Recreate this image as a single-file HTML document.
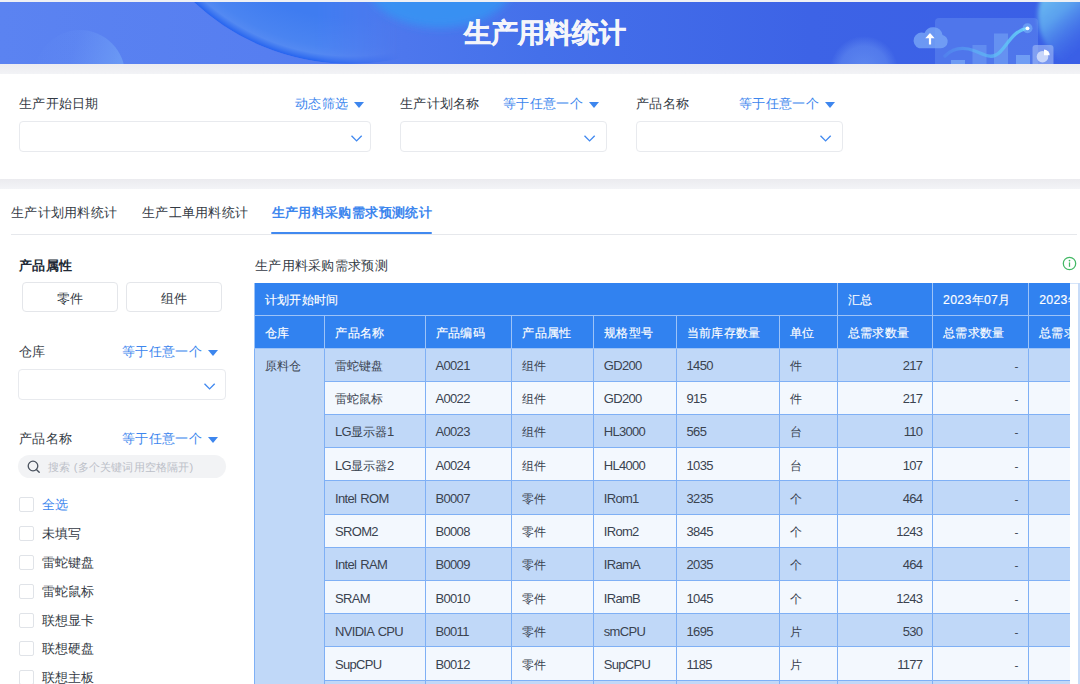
<!DOCTYPE html>
<html><head><meta charset="utf-8">
<style>
*{box-sizing:border-box;margin:0;padding:0}
html,body{width:1080px;height:684px;overflow:hidden;background:#eff0f4;font-family:"Liberation Sans",sans-serif;color:#333a44}
.abs{position:absolute}
#banner{position:absolute;left:0;top:2px;width:1080px;height:62px;overflow:hidden;background:linear-gradient(90deg,#5a83f0 0%,#4b78ee 30%,#3f6eea 60%,#3a62e6 85%,#3d66e8 100%)}
#title{position:absolute;left:464px;top:15px;font-size:26.5px;font-weight:bold;color:#f4f5fa;line-height:32px;white-space:nowrap;-webkit-text-stroke:0.5px #f4f5fa}
#filter{position:absolute;left:0;top:74px;width:1080px;height:105px;background:#fff}
#main{position:absolute;left:0;top:189px;width:1080px;height:495px;background:#fff}
.lbl{position:absolute;letter-spacing:0.3px;font-size:13px;line-height:16px;white-space:nowrap;color:#333a44}
.lnk{position:absolute;letter-spacing:0.35px;font-size:13px;line-height:16px;white-space:nowrap;color:#3d86ee}
.tri{display:inline-block;width:0;height:0;border-left:5px solid transparent;border-right:5px solid transparent;border-top:6px solid #3d86ee;vertical-align:middle;margin-left:5.5px;position:relative;top:0px}
.box{position:absolute;border:1px solid #e8eaee;border-radius:4px;background:#fff}
.chev{position:absolute;width:12px;height:7px}
.tab{position:absolute;top:16px;letter-spacing:0.3px;font-size:13px;line-height:16px;white-space:nowrap;color:#333a44}
.btn{position:absolute;top:93px;height:30px;border:1px solid #e4e6ea;border-radius:4px;font-size:13px;line-height:32px;text-align:center;color:#333a44}
.cb{position:absolute;left:18.5px;width:15px;height:15px;border:1px solid #e0e3e8;border-radius:2px;background:#fff;margin-top:-0.5px}
.rb{position:absolute;left:0;width:900px}
.hl{position:absolute;width:900px;height:1px;background:#7fb0f5}
.vl{position:absolute;width:1px;background:#7fb0f5}
.hhl{position:absolute;height:1px;background:#9cc3f8}
.hvl{position:absolute;width:1px;background:#9cc3f8}
.th{position:absolute;white-space:nowrap;color:#fff;font-size:12.3px;letter-spacing:0.3px;font-weight:400;padding-top:2px;-webkit-text-stroke:0.15px #fff}
.td{position:absolute;white-space:nowrap;color:#3a4350;font-size:11.7px;padding-top:1px}
.tr{text-align:right}
.lat{font-size:13px;letter-spacing:-0.7px;word-spacing:1.2px}
.cbl{position:absolute;left:42px;font-size:13px;line-height:12px;white-space:nowrap;color:#333a44}
</style></head><body>
<div id="banner">
<svg width="1080" height="62" viewBox="0 2 1080 62" style="position:absolute;left:0;top:0">
<defs>
<linearGradient id="bg" x1="0" x2="1" y1="0" y2="0">
<stop offset="0" stop-color="#5b83f1"/><stop offset="0.25" stop-color="#567ef0"/><stop offset="0.5" stop-color="#4470ea"/><stop offset="0.75" stop-color="#3d63e6"/><stop offset="1" stop-color="#3a5fe6"/>
</linearGradient>
<radialGradient id="cyan1" cx="0.5" cy="0.5" r="0.5"><stop offset="0" stop-color="#36a8f8" stop-opacity="0.85"/><stop offset="1" stop-color="#36a8f8" stop-opacity="0"/></radialGradient>
<radialGradient id="soft" cx="0.5" cy="0.5" r="0.5"><stop offset="0" stop-color="#7aa6f6" stop-opacity="0.55"/><stop offset="0.7" stop-color="#7aa6f6" stop-opacity="0.35"/><stop offset="1" stop-color="#7aa6f6" stop-opacity="0"/></radialGradient>
<radialGradient id="glow" cx="0.5" cy="0.5" r="0.5"><stop offset="0" stop-color="#70d0f4" stop-opacity="0.95"/><stop offset="0.45" stop-color="#5eaef2" stop-opacity="0.6"/><stop offset="1" stop-color="#4a80ee" stop-opacity="0"/></radialGradient>
<linearGradient id="circ" x1="0" y1="1" x2="1" y2="0"><stop offset="0" stop-color="#5583f0"/><stop offset="0.6" stop-color="#3f7bef"/><stop offset="1" stop-color="#3590f3"/></linearGradient>
<filter id="b1" x="-10%" y="-10%" width="120%" height="120%"><feGaussianBlur stdDeviation="1.2"/></filter>
<filter id="b2" x="-30%" y="-30%" width="160%" height="160%"><feGaussianBlur stdDeviation="4"/></filter>
<linearGradient id="edge" gradientUnits="userSpaceOnUse" x1="190" y1="0" x2="470" y2="0"><stop offset="0" stop-color="#2563f2" stop-opacity="0.9"/><stop offset="0.55" stop-color="#2563f2" stop-opacity="0.7"/><stop offset="0.85" stop-color="#2563f2" stop-opacity="0"/></linearGradient>
<linearGradient id="curveg" gradientUnits="userSpaceOnUse" x1="945" y1="0" x2="1028" y2="0"><stop offset="0" stop-color="#5cc2f6" stop-opacity="0.15"/><stop offset="0.5" stop-color="#5cc2f6" stop-opacity="0.6"/><stop offset="1" stop-color="#66ccf8" stop-opacity="1"/></linearGradient>
<linearGradient id="lsoft" x1="0" y1="0" x2="1" y2="0.3"><stop offset="0" stop-color="#7aa8f8" stop-opacity="0"/><stop offset="0.45" stop-color="#7aa8f8" stop-opacity="0.1"/><stop offset="1" stop-color="#7aaef8" stop-opacity="0.55"/></linearGradient>
<radialGradient id="bigc" gradientUnits="userSpaceOnUse" cx="350.5" cy="-165" r="229"><stop offset="0.8" stop-color="#3f7cf0"/><stop offset="0.93" stop-color="#4a84f1"/><stop offset="0.965" stop-color="#5389f2"/><stop offset="0.985" stop-color="#3a74f0"/><stop offset="0.997" stop-color="#2866f0"/><stop offset="1" stop-color="#4470ee"/></radialGradient>
<linearGradient id="mkg" gradientUnits="userSpaceOnUse" x1="315" y1="0" x2="400" y2="0"><stop offset="0" stop-color="#fff"/><stop offset="1" stop-color="#fff" stop-opacity="0"/></linearGradient>
<mask id="mk" maskUnits="userSpaceOnUse" x="0" y="0" width="1080" height="70"><rect x="0" y="0" width="1080" height="70" fill="url(#mkg)"/></mask>
<linearGradient id="glow2" x1="0.15" y1="0.1" x2="0.75" y2="0.8"><stop offset="0" stop-color="#74c8f2" stop-opacity="1"/><stop offset="0.35" stop-color="#62b0f0" stop-opacity="0.8"/><stop offset="0.75" stop-color="#4a7eec" stop-opacity="0"/></linearGradient>
<filter id="b3" x="-20%" y="-20%" width="140%" height="140%"><feGaussianBlur stdDeviation="2"/></filter>
<clipPath id="bc"><rect x="0" y="2" width="1080" height="62"/></clipPath>
</defs>
<g clip-path="url(#bc)">
<rect x="0" y="0" width="1080" height="70" fill="url(#bg)"/>
<circle cx="80" cy="75" r="45" fill="url(#lsoft)"/>
<circle cx="350.5" cy="-165" r="229" fill="url(#bigc)" mask="url(#mk)"/>
<ellipse cx="440" cy="-20" rx="75" ry="48" fill="#3597f4" fill-opacity="0.8" filter="url(#b2)"/>
<circle cx="864" cy="70" r="34" fill="url(#soft)"/>
<circle cx="1092" cy="16" r="54" fill="url(#glow2)" filter="url(#b3)"/>
<!-- illustration -->
<rect x="935" y="18" width="103" height="60" rx="4" fill="#7aa6f6" fill-opacity="0.32"/>
<rect x="951" y="60" width="14" height="8" fill="#78a8f6" fill-opacity="0.75"/>
<rect x="972.5" y="45" width="14" height="25" fill="#78a8f6" fill-opacity="0.45"/>
<rect x="994" y="33.5" width="14" height="35" fill="#78a8f6" fill-opacity="0.55"/>
<rect x="1016" y="55" width="14" height="12" fill="#78a8f6" fill-opacity="0.8"/>
<path d="M945 56 C952 49 962 46 975 51 C985 55 992 60 1000 52 C1008 44 1014 30 1027.5 28.3" fill="none" stroke="url(#curveg)" stroke-width="3.3" stroke-linecap="round"/>
<circle cx="1027.5" cy="28.3" r="5" fill="#8fd4ff" fill-opacity="0.4"/>
<circle cx="1027.5" cy="28.3" r="1.9" fill="#ffffff"/>
<path d="M919 48.3 h22 a6.8 6.8 0 0 0 1.5 -13.4 a9.5 9.5 0 0 0 -18 -2 a7.6 7.6 0 0 0 -5.5 15.4 z" fill="#78a6f6" fill-opacity="0.8"/>
<path d="M930 44.5 v-7.5" stroke="#ffffff" stroke-width="2.2" fill="none"/>
<path d="M925.3 38.3 L930 33 L934.7 38.3 z" fill="#ffffff"/>
<rect x="1032.5" y="45" width="21" height="22" rx="3" fill="#a3bcf6" fill-opacity="0.6"/>
<circle cx="1042.5" cy="56.7" r="5.8" fill="#c8d6fa"/>
<path d="M1044 49.6 v5.7 h5.7 a5.7 5.7 0 0 0 -5.7 -5.7 z" fill="#ffffff"/>
</g>
</svg>
  <div id="title">生产用料统计</div>
</div>

<div class="abs" style="left:0;top:64px;width:1080px;height:10px;background:linear-gradient(#ececf0,#f2f3f6)"></div>
<div class="abs" style="left:0;top:179px;width:1080px;height:10px;background:linear-gradient(#ebebef,#f3f4f7)"></div>
<div id="filter">
  <div class="lbl" style="left:19px;top:22px">生产开始日期</div>
  <div class="lnk" style="left:295px;top:22px">动态筛选<span class="tri"></span></div>
  <div class="box" style="left:19px;top:47px;width:352px;height:31px"><svg class="chev" style="left:331px;top:12.5px" viewBox="0 0 12 7"><path d="M0.5 0.7 L5.6 5.9 L10.7 0.7" fill="none" stroke="#4189f0" stroke-width="1.35"/></svg></div>

  <div class="lbl" style="left:400px;top:22px">生产计划名称</div>
  <div class="lnk" style="left:503px;top:22px">等于任意一个<span class="tri"></span></div>
  <div class="box" style="left:400px;top:47px;width:207px;height:31px"><svg class="chev" style="left:183px;top:12.5px" viewBox="0 0 12 7"><path d="M0.5 0.7 L5.6 5.9 L10.7 0.7" fill="none" stroke="#4189f0" stroke-width="1.35"/></svg></div>

  <div class="lbl" style="left:636px;top:22px">产品名称</div>
  <div class="lnk" style="left:739px;top:22px">等于任意一个<span class="tri"></span></div>
  <div class="box" style="left:636px;top:47px;width:207px;height:31px"><svg class="chev" style="left:183px;top:12.5px" viewBox="0 0 12 7"><path d="M0.5 0.7 L5.6 5.9 L10.7 0.7" fill="none" stroke="#4189f0" stroke-width="1.35"/></svg></div>
</div>

<div id="main">
  <div class="tab" style="left:11px">生产计划用料统计</div>
  <div class="tab" style="left:142px">生产工单用料统计</div>
  <div class="tab" style="left:271.5px;color:#3d86ee;font-weight:bold;letter-spacing:0.4px">生产用料采购需求预测统计</div>
  <div class="abs" style="left:11px;top:45px;width:1066px;height:1px;background:#e6e8ec"></div>
  <div class="abs" style="left:271px;top:43px;width:161px;height:2px;background:#4189f0;border-radius:1px"></div>

  <div class="lbl" style="left:19px;top:69px;font-weight:bold;color:#222a35">产品属性</div>
  <div class="btn" style="left:22px;width:96px">零件</div>
  <div class="btn" style="left:126px;width:96px">组件</div>

  <div class="lbl" style="left:19px;top:155px">仓库</div>
  <div class="lnk" style="left:122px;top:155px">等于任意一个<span class="tri"></span></div>
  <div class="box" style="left:18px;top:180px;width:208px;height:31px"><svg class="chev" style="left:185px;top:12.5px" viewBox="0 0 12 7"><path d="M0.5 0.7 L5.6 5.9 L10.7 0.7" fill="none" stroke="#4189f0" stroke-width="1.35"/></svg></div>

  <div class="lbl" style="left:19px;top:242px">产品名称</div>
  <div class="lnk" style="left:122px;top:242px">等于任意一个<span class="tri"></span></div>
  <div class="abs" style="left:18px;top:266px;width:208px;height:23px;border-radius:12px;background:#f2f3f5">
<svg style="position:absolute;left:9px;top:5px" width="13" height="13" viewBox="0 0 13 13"><circle cx="6" cy="6" r="4.8" fill="none" stroke="#4a525e" stroke-width="1.3"/><path d="M9.4 9.4 L12.2 12.2" stroke="#4a525e" stroke-width="1.4" stroke-linecap="round"/></svg>
<div style="position:absolute;left:30px;top:1px;line-height:23px;font-size:11px;letter-spacing:0.2px;color:#bcc0c8;white-space:nowrap">搜索 (多个关键词用空格隔开)</div></div>

  <div class="cb" style="top:308px"></div><div class="cbl" style="top:310px;color:#3d86ee">全选</div>
  <div class="cb" style="top:337px"></div><div class="cbl" style="top:339px">未填写</div>
  <div class="cb" style="top:366px"></div><div class="cbl" style="top:368px">雷蛇键盘</div>
  <div class="cb" style="top:395px"></div><div class="cbl" style="top:397px">雷蛇鼠标</div>
  <div class="cb" style="top:424px"></div><div class="cbl" style="top:426px">联想显卡</div>
  <div class="cb" style="top:452px"></div><div class="cbl" style="top:454px">联想硬盘</div>
  <div class="cb" style="top:481px"></div><div class="cbl" style="top:483px">联想主板</div>

  <div class="lbl" style="left:255px;top:69px">生产用料采购需求预测</div>
<svg style="position:absolute;left:1062px;top:67px" width="15" height="15" viewBox="0 0 15 15"><circle cx="7.5" cy="7.5" r="6.2" fill="none" stroke="#43b865" stroke-width="1.25"/><circle cx="7.5" cy="4.6" r="0.85" fill="#43b865"/><path d="M7.5 6.4 V10.8" stroke="#43b865" stroke-width="1.25"/></svg>
</div>
<!--TABLE-->
<div id="tbl" style="position:absolute;left:254.00px;top:283.00px;width:816.00px;height:401.00px;overflow:hidden;background:#3182f0">
<div class="rb" style="top:65.00px;height:33.22px;background:#c0d8f8"></div>
<div class="rb" style="top:98.22px;height:33.22px;background:#f3f8fe"></div>
<div class="rb" style="top:131.44px;height:33.22px;background:#c0d8f8"></div>
<div class="rb" style="top:164.66px;height:33.22px;background:#f3f8fe"></div>
<div class="rb" style="top:197.88px;height:33.22px;background:#c0d8f8"></div>
<div class="rb" style="top:231.10px;height:33.22px;background:#f3f8fe"></div>
<div class="rb" style="top:264.32px;height:33.22px;background:#c0d8f8"></div>
<div class="rb" style="top:297.54px;height:33.22px;background:#f3f8fe"></div>
<div class="rb" style="top:330.76px;height:33.22px;background:#c0d8f8"></div>
<div class="rb" style="top:363.98px;height:33.22px;background:#f3f8fe"></div>
<div class="rb" style="top:397.20px;height:33.22px;background:#c0d8f8"></div>
<div class="rb" style="left:0;width:70.50px;top:65.00px;height:336.00px;background:#c0d8f8"></div>
<div class="hl" style="left:70.50px;top:97.72px"></div>
<div class="hl" style="left:70.50px;top:130.94px"></div>
<div class="hl" style="left:70.50px;top:164.16px"></div>
<div class="hl" style="left:70.50px;top:197.38px"></div>
<div class="hl" style="left:70.50px;top:230.60px"></div>
<div class="hl" style="left:70.50px;top:263.82px"></div>
<div class="hl" style="left:70.50px;top:297.04px"></div>
<div class="hl" style="left:70.50px;top:330.26px"></div>
<div class="hl" style="left:70.50px;top:363.48px"></div>
<div class="hl" style="left:70.50px;top:396.70px"></div>
<div class="hl" style="left:70.50px;top:429.92px"></div>
<div class="vl" style="left:70.00px;top:65.00px;height:336.00px"></div>
<div class="vl" style="left:170.50px;top:65.00px;height:336.00px"></div>
<div class="vl" style="left:257.00px;top:65.00px;height:336.00px"></div>
<div class="vl" style="left:338.70px;top:65.00px;height:336.00px"></div>
<div class="vl" style="left:421.50px;top:65.00px;height:336.00px"></div>
<div class="vl" style="left:524.80px;top:65.00px;height:336.00px"></div>
<div class="vl" style="left:582.50px;top:65.00px;height:336.00px"></div>
<div class="vl" style="left:677.80px;top:65.00px;height:336.00px"></div>
<div class="vl" style="left:773.90px;top:65.00px;height:336.00px"></div>
<div class="vl" style="left:0;top:65.00px;height:336.00px"></div>
<div class="hvl" style="left:0;top:0;height:65.00px"></div>
<div class="hhl" style="left:0;top:32.00px;width:900px"></div>
<div class="hhl" style="left:0;top:64.50px;width:900px"></div>
<div class="hvl" style="left:70.00px;top:32.50px;height:32.50px"></div>
<div class="hvl" style="left:170.50px;top:32.50px;height:32.50px"></div>
<div class="hvl" style="left:257.00px;top:32.50px;height:32.50px"></div>
<div class="hvl" style="left:338.70px;top:32.50px;height:32.50px"></div>
<div class="hvl" style="left:421.50px;top:32.50px;height:32.50px"></div>
<div class="hvl" style="left:524.80px;top:32.50px;height:32.50px"></div>
<div class="hvl" style="left:582.50px;top:0;height:65.00px"></div>
<div class="hvl" style="left:677.80px;top:0;height:65.00px"></div>
<div class="hvl" style="left:773.90px;top:0;height:65.00px"></div>
<div class="th" style="left:10.80px;top:-1.00px;height:32.50px;line-height:32.50px">计划开始时间</div>
<div class="th" style="left:593.80px;top:-1.00px;height:32.50px;line-height:32.50px">汇总</div>
<div class="th" style="left:689.10px;top:-1.00px;height:32.50px;line-height:32.50px">2023年07月</div>
<div class="th" style="left:785.20px;top:-1.00px;height:32.50px;line-height:32.50px">2023年08月</div>
<div class="th" style="left:10.80px;top:31.50px;height:32.50px;line-height:32.50px">仓库</div>
<div class="th" style="left:81.30px;top:31.50px;height:32.50px;line-height:32.50px">产品名称</div>
<div class="th" style="left:181.80px;top:31.50px;height:32.50px;line-height:32.50px">产品编码</div>
<div class="th" style="left:268.30px;top:31.50px;height:32.50px;line-height:32.50px">产品属性</div>
<div class="th" style="left:350.00px;top:31.50px;height:32.50px;line-height:32.50px">规格型号</div>
<div class="th" style="left:432.80px;top:31.50px;height:32.50px;line-height:32.50px">当前库存数量</div>
<div class="th" style="left:536.10px;top:31.50px;height:32.50px;line-height:32.50px">单位</div>
<div class="th" style="left:593.80px;top:31.50px;height:32.50px;line-height:32.50px">总需求数量</div>
<div class="th" style="left:689.10px;top:31.50px;height:32.50px;line-height:32.50px">总需求数量</div>
<div class="th" style="left:785.20px;top:31.50px;height:32.50px;line-height:32.50px">总需求数量</div>
<div class="td" style="left:10.80px;top:65.00px;height:33.22px;line-height:33.22px">原料仓</div>
<div class="td" style="left:81.10px;top:65.00px;height:33.22px;line-height:33.22px">雷蛇键盘</div>
<div class="td" style="left:181.60px;top:65.00px;height:33.22px;line-height:33.22px"><span class="lat">A0021</span></div>
<div class="td" style="left:268.10px;top:65.00px;height:33.22px;line-height:33.22px">组件</div>
<div class="td" style="left:349.80px;top:65.00px;height:33.22px;line-height:33.22px"><span class="lat">GD200</span></div>
<div class="td" style="left:432.60px;top:65.00px;height:33.22px;line-height:33.22px"><span class="lat">1450</span></div>
<div class="td" style="left:535.90px;top:65.00px;height:33.22px;line-height:33.22px">件</div>
<div class="td tr" style="left:583.00px;width:85.30px;top:65.00px;height:33.22px;line-height:33.22px"><span class="lat">217</span></div>
<div class="td tr" style="left:678.30px;width:86.10px;top:65.00px;height:33.22px;line-height:33.22px">-</div>
<div class="td" style="left:81.10px;top:98.22px;height:33.22px;line-height:33.22px">雷蛇鼠标</div>
<div class="td" style="left:181.60px;top:98.22px;height:33.22px;line-height:33.22px"><span class="lat">A0022</span></div>
<div class="td" style="left:268.10px;top:98.22px;height:33.22px;line-height:33.22px">组件</div>
<div class="td" style="left:349.80px;top:98.22px;height:33.22px;line-height:33.22px"><span class="lat">GD200</span></div>
<div class="td" style="left:432.60px;top:98.22px;height:33.22px;line-height:33.22px"><span class="lat">915</span></div>
<div class="td" style="left:535.90px;top:98.22px;height:33.22px;line-height:33.22px">件</div>
<div class="td tr" style="left:583.00px;width:85.30px;top:98.22px;height:33.22px;line-height:33.22px"><span class="lat">217</span></div>
<div class="td tr" style="left:678.30px;width:86.10px;top:98.22px;height:33.22px;line-height:33.22px">-</div>
<div class="td" style="left:81.10px;top:131.44px;height:33.22px;line-height:33.22px"><span class="lat">LG</span>显示器<span class="lat">1</span></div>
<div class="td" style="left:181.60px;top:131.44px;height:33.22px;line-height:33.22px"><span class="lat">A0023</span></div>
<div class="td" style="left:268.10px;top:131.44px;height:33.22px;line-height:33.22px">组件</div>
<div class="td" style="left:349.80px;top:131.44px;height:33.22px;line-height:33.22px"><span class="lat">HL3000</span></div>
<div class="td" style="left:432.60px;top:131.44px;height:33.22px;line-height:33.22px"><span class="lat">565</span></div>
<div class="td" style="left:535.90px;top:131.44px;height:33.22px;line-height:33.22px">台</div>
<div class="td tr" style="left:583.00px;width:85.30px;top:131.44px;height:33.22px;line-height:33.22px"><span class="lat">110</span></div>
<div class="td tr" style="left:678.30px;width:86.10px;top:131.44px;height:33.22px;line-height:33.22px">-</div>
<div class="td" style="left:81.10px;top:164.66px;height:33.22px;line-height:33.22px"><span class="lat">LG</span>显示器<span class="lat">2</span></div>
<div class="td" style="left:181.60px;top:164.66px;height:33.22px;line-height:33.22px"><span class="lat">A0024</span></div>
<div class="td" style="left:268.10px;top:164.66px;height:33.22px;line-height:33.22px">组件</div>
<div class="td" style="left:349.80px;top:164.66px;height:33.22px;line-height:33.22px"><span class="lat">HL4000</span></div>
<div class="td" style="left:432.60px;top:164.66px;height:33.22px;line-height:33.22px"><span class="lat">1035</span></div>
<div class="td" style="left:535.90px;top:164.66px;height:33.22px;line-height:33.22px">台</div>
<div class="td tr" style="left:583.00px;width:85.30px;top:164.66px;height:33.22px;line-height:33.22px"><span class="lat">107</span></div>
<div class="td tr" style="left:678.30px;width:86.10px;top:164.66px;height:33.22px;line-height:33.22px">-</div>
<div class="td" style="left:81.10px;top:197.88px;height:33.22px;line-height:33.22px"><span class="lat">Intel ROM</span></div>
<div class="td" style="left:181.60px;top:197.88px;height:33.22px;line-height:33.22px"><span class="lat">B0007</span></div>
<div class="td" style="left:268.10px;top:197.88px;height:33.22px;line-height:33.22px">零件</div>
<div class="td" style="left:349.80px;top:197.88px;height:33.22px;line-height:33.22px"><span class="lat">IRom1</span></div>
<div class="td" style="left:432.60px;top:197.88px;height:33.22px;line-height:33.22px"><span class="lat">3235</span></div>
<div class="td" style="left:535.90px;top:197.88px;height:33.22px;line-height:33.22px">个</div>
<div class="td tr" style="left:583.00px;width:85.30px;top:197.88px;height:33.22px;line-height:33.22px"><span class="lat">464</span></div>
<div class="td tr" style="left:678.30px;width:86.10px;top:197.88px;height:33.22px;line-height:33.22px">-</div>
<div class="td" style="left:81.10px;top:231.10px;height:33.22px;line-height:33.22px"><span class="lat">SROM2</span></div>
<div class="td" style="left:181.60px;top:231.10px;height:33.22px;line-height:33.22px"><span class="lat">B0008</span></div>
<div class="td" style="left:268.10px;top:231.10px;height:33.22px;line-height:33.22px">零件</div>
<div class="td" style="left:349.80px;top:231.10px;height:33.22px;line-height:33.22px"><span class="lat">IRom2</span></div>
<div class="td" style="left:432.60px;top:231.10px;height:33.22px;line-height:33.22px"><span class="lat">3845</span></div>
<div class="td" style="left:535.90px;top:231.10px;height:33.22px;line-height:33.22px">个</div>
<div class="td tr" style="left:583.00px;width:85.30px;top:231.10px;height:33.22px;line-height:33.22px"><span class="lat">1243</span></div>
<div class="td tr" style="left:678.30px;width:86.10px;top:231.10px;height:33.22px;line-height:33.22px">-</div>
<div class="td" style="left:81.10px;top:264.32px;height:33.22px;line-height:33.22px"><span class="lat">Intel RAM</span></div>
<div class="td" style="left:181.60px;top:264.32px;height:33.22px;line-height:33.22px"><span class="lat">B0009</span></div>
<div class="td" style="left:268.10px;top:264.32px;height:33.22px;line-height:33.22px">零件</div>
<div class="td" style="left:349.80px;top:264.32px;height:33.22px;line-height:33.22px"><span class="lat">IRamA</span></div>
<div class="td" style="left:432.60px;top:264.32px;height:33.22px;line-height:33.22px"><span class="lat">2035</span></div>
<div class="td" style="left:535.90px;top:264.32px;height:33.22px;line-height:33.22px">个</div>
<div class="td tr" style="left:583.00px;width:85.30px;top:264.32px;height:33.22px;line-height:33.22px"><span class="lat">464</span></div>
<div class="td tr" style="left:678.30px;width:86.10px;top:264.32px;height:33.22px;line-height:33.22px">-</div>
<div class="td" style="left:81.10px;top:297.54px;height:33.22px;line-height:33.22px"><span class="lat">SRAM</span></div>
<div class="td" style="left:181.60px;top:297.54px;height:33.22px;line-height:33.22px"><span class="lat">B0010</span></div>
<div class="td" style="left:268.10px;top:297.54px;height:33.22px;line-height:33.22px">零件</div>
<div class="td" style="left:349.80px;top:297.54px;height:33.22px;line-height:33.22px"><span class="lat">IRamB</span></div>
<div class="td" style="left:432.60px;top:297.54px;height:33.22px;line-height:33.22px"><span class="lat">1045</span></div>
<div class="td" style="left:535.90px;top:297.54px;height:33.22px;line-height:33.22px">个</div>
<div class="td tr" style="left:583.00px;width:85.30px;top:297.54px;height:33.22px;line-height:33.22px"><span class="lat">1243</span></div>
<div class="td tr" style="left:678.30px;width:86.10px;top:297.54px;height:33.22px;line-height:33.22px">-</div>
<div class="td" style="left:81.10px;top:330.76px;height:33.22px;line-height:33.22px"><span class="lat">NVIDIA CPU</span></div>
<div class="td" style="left:181.60px;top:330.76px;height:33.22px;line-height:33.22px"><span class="lat">B0011</span></div>
<div class="td" style="left:268.10px;top:330.76px;height:33.22px;line-height:33.22px">零件</div>
<div class="td" style="left:349.80px;top:330.76px;height:33.22px;line-height:33.22px"><span class="lat">smCPU</span></div>
<div class="td" style="left:432.60px;top:330.76px;height:33.22px;line-height:33.22px"><span class="lat">1695</span></div>
<div class="td" style="left:535.90px;top:330.76px;height:33.22px;line-height:33.22px">片</div>
<div class="td tr" style="left:583.00px;width:85.30px;top:330.76px;height:33.22px;line-height:33.22px"><span class="lat">530</span></div>
<div class="td tr" style="left:678.30px;width:86.10px;top:330.76px;height:33.22px;line-height:33.22px">-</div>
<div class="td" style="left:81.10px;top:363.98px;height:33.22px;line-height:33.22px"><span class="lat">SupCPU</span></div>
<div class="td" style="left:181.60px;top:363.98px;height:33.22px;line-height:33.22px"><span class="lat">B0012</span></div>
<div class="td" style="left:268.10px;top:363.98px;height:33.22px;line-height:33.22px">零件</div>
<div class="td" style="left:349.80px;top:363.98px;height:33.22px;line-height:33.22px"><span class="lat">SupCPU</span></div>
<div class="td" style="left:432.60px;top:363.98px;height:33.22px;line-height:33.22px"><span class="lat">1185</span></div>
<div class="td" style="left:535.90px;top:363.98px;height:33.22px;line-height:33.22px">片</div>
<div class="td tr" style="left:583.00px;width:85.30px;top:363.98px;height:33.22px;line-height:33.22px"><span class="lat">1177</span></div>
<div class="td tr" style="left:678.30px;width:86.10px;top:363.98px;height:33.22px;line-height:33.22px">-</div>
</div>
<div style="position:absolute;left:1070px;top:283.00px;width:10px;height:401.00px;background:#fff;border-top:1px solid #d6e5fa"></div>
<div style="position:absolute;left:1078.3px;top:283.00px;width:2px;height:401.00px;background:#c8dcf8"></div>
<!--/TABLE-->
</body></html>
